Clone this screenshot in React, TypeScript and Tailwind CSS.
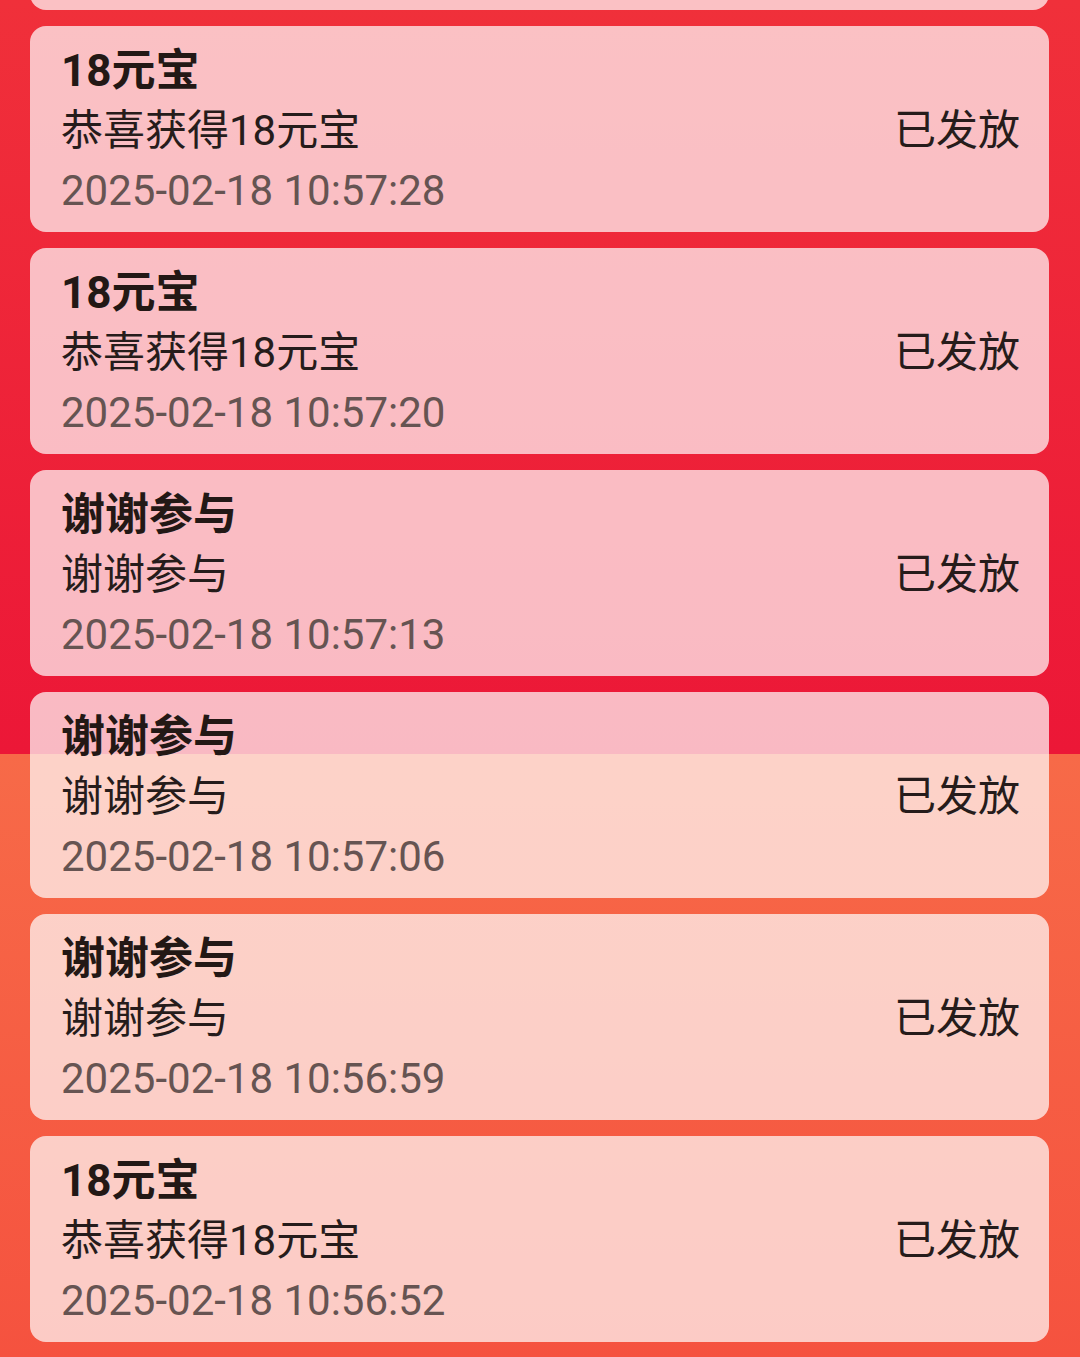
import React from 'react';

interface Record {
  title: string;
  desc: string;
  time: string;
}

const RECORDS: Record[] = [
  { title: "18元宝", desc: "恭喜获得18元宝", time: "2025-02-18 10:57:28" },
  { title: "18元宝", desc: "恭喜获得18元宝", time: "2025-02-18 10:57:20" },
  { title: "谢谢参与", desc: "谢谢参与", time: "2025-02-18 10:57:13" },
  { title: "谢谢参与", desc: "谢谢参与", time: "2025-02-18 10:57:06" },
  { title: "谢谢参与", desc: "谢谢参与", time: "2025-02-18 10:56:59" },
  { title: "18元宝", desc: "恭喜获得18元宝", time: "2025-02-18 10:56:52" },
];

function RecordCard({ item }: { item: Record }) {
  return (
    <div className="h-[206px] shrink-0 rounded-2xl bg-white/70 pl-[31px] pr-[29px] pt-[15px] pb-[11px] flex items-center justify-between">
      <div className="flex flex-col">
        <div className="text-[44px] leading-[60px] font-bold text-[#231815]">{item.title}</div>
        <div className="text-[42px] leading-[60px] text-[#261c1b]">{item.desc}</div>
        <div className="text-[42px] leading-[60px] text-[#665452]">{item.time}</div>
      </div>
      <div className="text-[42px] leading-[60px] text-[#261c1b]">已发放</div>
    </div>
  );
}

export default function App() {
  return (
    <div className="w-[1080px] h-[1357px] overflow-hidden font-['Roboto','Noto_Sans_CJK_SC',sans-serif] bg-[linear-gradient(to_bottom,#f0303a_0px,#ec1737_754px,#f76a48_754px,#f5523f_1357px)]">
      <div className="px-[30px] pr-[31px] flex flex-col gap-4">
        {/* previous record, scrolled mostly out of view */}
        <div className="h-[206px] shrink-0 -mt-[196px] rounded-2xl bg-white/70" />
        {RECORDS.map((item, idx) => (
          <RecordCard key={idx} item={item} />
        ))}
      </div>
    </div>
  );
}
